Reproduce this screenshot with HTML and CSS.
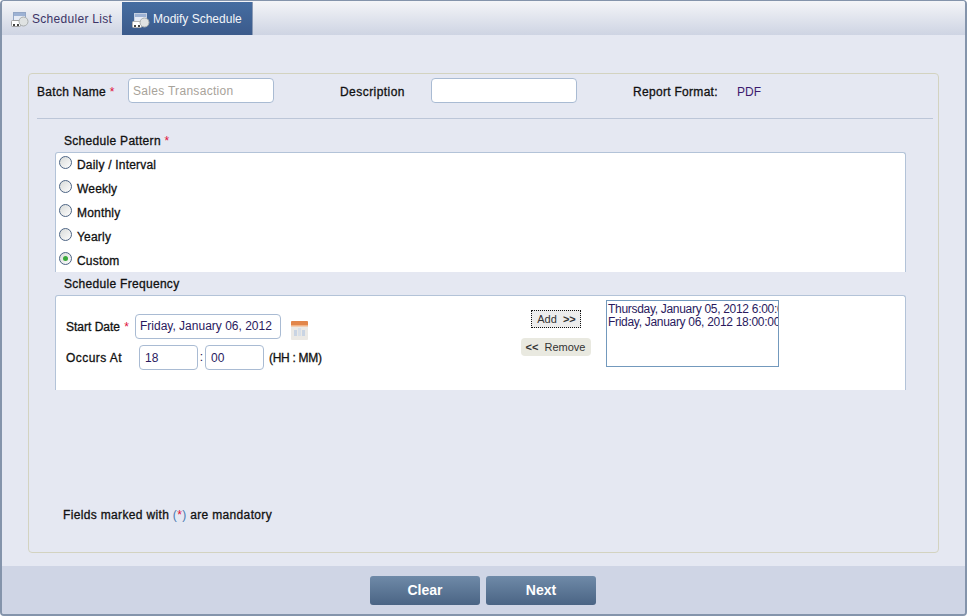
FILE: index.html
```html
<!DOCTYPE html>
<html>
  <head>
    <meta name="viewport" content="width=device-width, initial-scale=1.0" />
    <title>Modify Schedule</title>
    <link rel="stylesheet" href="styles.css">
  </head>
  <body>
    <div class="window">
      <div class="tabs">
        <a class="tab">
          <svg class="tab-icon" width="18" height="16" viewBox="0 0 18 16">
            <rect x="2.5" y="1.5" width="12" height="11" fill="#e6ebf5" stroke="#93a6c6"/>
            <rect x="3" y="2" width="11" height="3" fill="#9db2d4"/>
            <rect x="0.5" y="9.5" width="9" height="6" rx="1" fill="#fff" stroke="#a0a0a0"/>
            <rect x="2" y="13" width="2" height="2" fill="#444"/>
            <rect x="6" y="13" width="2" height="2" fill="#444"/>
            <circle cx="12.5" cy="10.5" r="4.5" fill="#dfe2e2" stroke="#a8adad"/>
          </svg>
          <span class="tab-text">Scheduler List</span>
        </a>
        <a class="tab active">
          <svg class="tab-icon" width="18" height="16" viewBox="0 0 18 16">
            <rect x="2.5" y="1.5" width="12" height="11" fill="#e6ebf5" stroke="#c4cfe0"/>
            <rect x="3" y="2" width="11" height="3" fill="#9db2d4"/>
            <rect x="0.5" y="9.5" width="9" height="6" rx="1" fill="#fff" stroke="#b5b5b5"/>
            <rect x="2" y="13" width="2" height="2" fill="#444"/>
            <rect x="6" y="13" width="2" height="2" fill="#444"/>
            <circle cx="12.5" cy="10.5" r="4.5" fill="#dfe2e2" stroke="#a8adad"/>
          </svg>
          <span class="tab-label">Modify Schedule</span>
        </a>
      </div>

      <div class="content">
        <div class="panel">
          <div class="top-row">
            <label class="lbl batch-lbl">Batch Name <span class="req">*</span></label>
            <input class="field batch" type="text" value="Sales Transaction" />
            <label class="lbl desc-lbl">Description</label>
            <input class="field desc" type="text" />
            <label class="lbl format-lbl">Report Format:</label>
            <span class="format-val">PDF</span>
          </div>
          <div class="rule"></div>

          <div class="section-title first">Schedule Pattern <span class="req">*</span></div>
          <div class="box pattern">
            <div class="radio-row"><span class="radio"></span><span class="lbl">Daily / Interval</span></div>
            <div class="radio-row"><span class="radio"></span><span class="lbl">Weekly</span></div>
            <div class="radio-row"><span class="radio"></span><span class="lbl">Monthly</span></div>
            <div class="radio-row"><span class="radio"></span><span class="lbl">Yearly</span></div>
            <div class="radio-row"><span class="radio on"></span><span class="lbl">Custom</span></div>
          </div>

          <div class="section-title">Schedule Frequency</div>
          <div class="box freq">
            <div class="when">
              <div class="when-row">
                <label class="lbl start-lbl">Start Date <span class="req">*</span></label>
                <input class="field start" type="text" value="Friday, January 06, 2012" />
                <svg class="cal" width="17" height="19" viewBox="0 0 17 19">
                  <rect x="0" y="0" width="17" height="19" rx="1" fill="#ebe9e5"/>
                  <rect x="0" y="0" width="17" height="5" rx="1" fill="#e2864a"/>
                  <rect x="0" y="4" width="17" height="1.5" fill="#f3b384"/>
                  <rect x="3" y="9" width="3" height="6" fill="#c9d4e3"/>
                  <rect x="7" y="7" width="3" height="8" fill="#d8dfe8"/>
                  <rect x="11" y="9" width="3" height="6" fill="#c9d4e3"/>
                </svg>
              </div>
              <div class="when-row">
                <label class="lbl occurs-lbl">Occurs At</label>
                <input class="field time" type="text" value="18" />
                <span class="colon">:</span>
                <input class="field time" type="text" value="00" />
                <span class="lbl hint">(HH : MM)</span>
              </div>
            </div>
            <div class="actions">
              <button class="small-btn add" type="button">Add &nbsp;<b>&gt;&gt;</b></button>
              <button class="small-btn remove" type="button"><b>&lt;&lt;</b>&nbsp; Remove</button>
            </div>
            <div class="listbox">
              <div>Thursday, January 05, 2012 6:00:00</div>
              <div>Friday, January 06, 2012 18:00:00</div>
            </div>
          </div>

          <div class="note lbl">Fields marked with <span class="paren">(<span class="req">*</span>)</span> are mandatory</div>
        </div>
      </div>

      <div class="footer">
        <button class="big-btn" type="button">Clear</button>
        <button class="big-btn" type="button">Next</button>
      </div>
    </div>
  </body>
</html>
```

FILE: styles.css
```css
* {
  padding: 0;
  margin: 0;
  box-sizing: border-box;
}
html, body {
  height: 100%;
}
body {
  font-family: "Liberation Sans", Arial, sans-serif;
  font-size: 12px;
  color: #1c0f4a;
  background: #fff;
  overflow: hidden;
}
.window {
  height: 616px;
  display: flex;
  flex-direction: column;
  border: 1px solid #8494ab;
  border-left-width: 2px;
  border-right-width: 2px;
  border-bottom-width: 2px;
  border-radius: 4px;
  overflow: hidden;
  background: #e5e8f2;
}

/* tabs */
.tabs {
  height: 34px;
  display: flex;
  background: linear-gradient(#f4f5f8, #ced4e3);
}
.tab {
  display: flex;
  align-items: center;
  gap: 3px;
  padding-left: 9px;
  width: 120px;
  color: #3c3466;
}
.tab-text {
  letter-spacing: 0.3px;
  padding-top: 2px;
}
.tab-label {
  padding-top: 2px;
}
.tab.active {
  width: 131px;
  margin-top: 1px;
  padding-left: 10px;
  color: #f2f5fa;
  background: linear-gradient(#456da1, #3b5a8b);
  border-right: 1px solid #8a9ab5;
}
.tab-icon {
  flex: none;
  margin-top: 3px;
}

/* panel */
.content {
  flex: 1;
  padding: 38px 26px 13px;
}
.panel {
  height: 480px;
  border: 1px solid #d3d3c0;
  border-radius: 4px;
  padding: 0 5px 0 8px;
}
.top-row {
  height: 44px;
  display: flex;
  align-items: center;
  padding-bottom: 11px;
}
.top-row .lbl, .format-val {
  padding-top: 3px;
}
.lbl {
  color: #111;
  font-weight: 400;
  letter-spacing: 0.3px;
  -webkit-text-stroke: 0.3px #111;
  white-space: nowrap;
}
.req {
  color: #e0103a;
  -webkit-text-stroke: 0;
}
.field {
  height: 25px;
  border: 1px solid #a9bbd3;
  border-radius: 4px;
  padding: 0 4px;
  font: 12px "Liberation Sans", Arial, sans-serif;
  color: #2a1a5e;
  background: #fff;
  outline: none;
}
.batch-lbl {
  width: 91px;
}
.batch {
  width: 146px;
  padding-top: 2px;
  color: #a8a39a;
  letter-spacing: 0.3px;
}
.top-row .desc-lbl {
  margin-left: 66px;
  width: 91px;
  letter-spacing: 0.45px;
}
.desc {
  width: 146px;
}
.format-lbl {
  margin-left: 56px;
  width: 104px;
}
.format-val {
  color: #3c1a6e;
}
.rule {
  height: 1px;
  background: #bcc6d8;
}

/* sections */
.section-title {
  color: #111;
  letter-spacing: 0.3px;
  -webkit-text-stroke: 0.3px #111;
  padding: 1px 0 0 27px;
  height: 23px;
  line-height: 23px;
}
.section-title.first {
  margin-top: 9px;
  height: 24px;
  line-height: 24px;
}
.box {
  margin-left: 18px;
  width: 851px;
  background: #fff;
  border: 1px solid #b3c3d8;
  border-bottom: 0;
  border-radius: 3px 3px 0 0;
}
.pattern {
  height: 120px;
}
.radio-row {
  height: 24px;
  display: flex;
  align-items: center;
  gap: 5px;
  padding-left: 3px;
}
.radio-row .lbl {
  letter-spacing: 0.2px;
}
.radio {
  width: 13px;
  height: 13px;
  border-radius: 50%;
  border: 1px solid #4d6484;
  background: linear-gradient(135deg, #d8dbd9, #fdfdfd);
  margin-top: -5px;
  display: flex;
  align-items: center;
  justify-content: center;
}
.radio.on::after {
  content: "";
  width: 5px;
  height: 5px;
  border-radius: 50%;
  background: #3aa83a;
}
.freq {
  height: 95px;
  display: flex;
}
.when {
  width: 457px;
  padding: 18px 0 0 10px;
}
.when-row {
  display: flex;
  align-items: center;
  height: 25px;
  margin-bottom: 6px;
}
.start-lbl {
  width: 69px;
  letter-spacing: 0;
  padding-top: 2px;
}
.start-lbl .req {
  margin-left: 1px;
}
.start {
  width: 146px;
  padding-left: 4px;
}
.cal {
  margin-left: 10px;
  margin-top: 8px;
}
.occurs-lbl {
  width: 73px;
  letter-spacing: 0.45px;
  padding-top: 2px;
}
.time {
  width: 59px;
  padding: 1px 0 0 5px;
}
.colon {
  width: 7px;
  text-align: center;
}
.hint {
  margin-left: 5px;
  letter-spacing: -0.3px;
  padding-top: 2px;
}
.actions {
  width: 85px;
  display: flex;
  flex-direction: column;
  align-items: center;
}
.small-btn {
  font: 11px "Liberation Sans", Arial, sans-serif;
  color: #333;
  background: #e9e9e0;
  border: 0;
  border-radius: 4px;
  height: 18px;
}
.add {
  width: 50px;
  margin-top: 14px;
  padding-left: 2px;
  outline: 1px dotted #111;
  outline-offset: -1px;
  border-radius: 0;
  background: #ececec;
}
.remove {
  width: 70px;
  margin-top: 10px;
}
.listbox {
  width: 173px;
  height: 67px;
  margin: 4px 0 0 8px;
  border: 1px solid #7399bd;
  padding: 2px 0 0 1px;
  overflow: hidden;
  white-space: nowrap;
  color: #2a1a5e;
  line-height: 13px;
  letter-spacing: -0.3px;
}
.note {
  margin: 118px 0 0 26px;
  letter-spacing: 0.34px;
}
.paren {
  color: #4a78b0;
  -webkit-text-stroke: 0;
}

/* footer */
.footer {
  height: 49px;
  background: #cfd5e5;
  display: flex;
  justify-content: center;
  gap: 6px;
  padding: 10px 2px 0 0;
}
.big-btn {
  width: 110px;
  height: 29px;
  border: 0;
  border-radius: 3px;
  padding-left: 1px;
  color: #fff;
  font: bold 14px "Liberation Sans", Arial, sans-serif;
  background: linear-gradient(#6f8aa8, #4a6484);
}
```
